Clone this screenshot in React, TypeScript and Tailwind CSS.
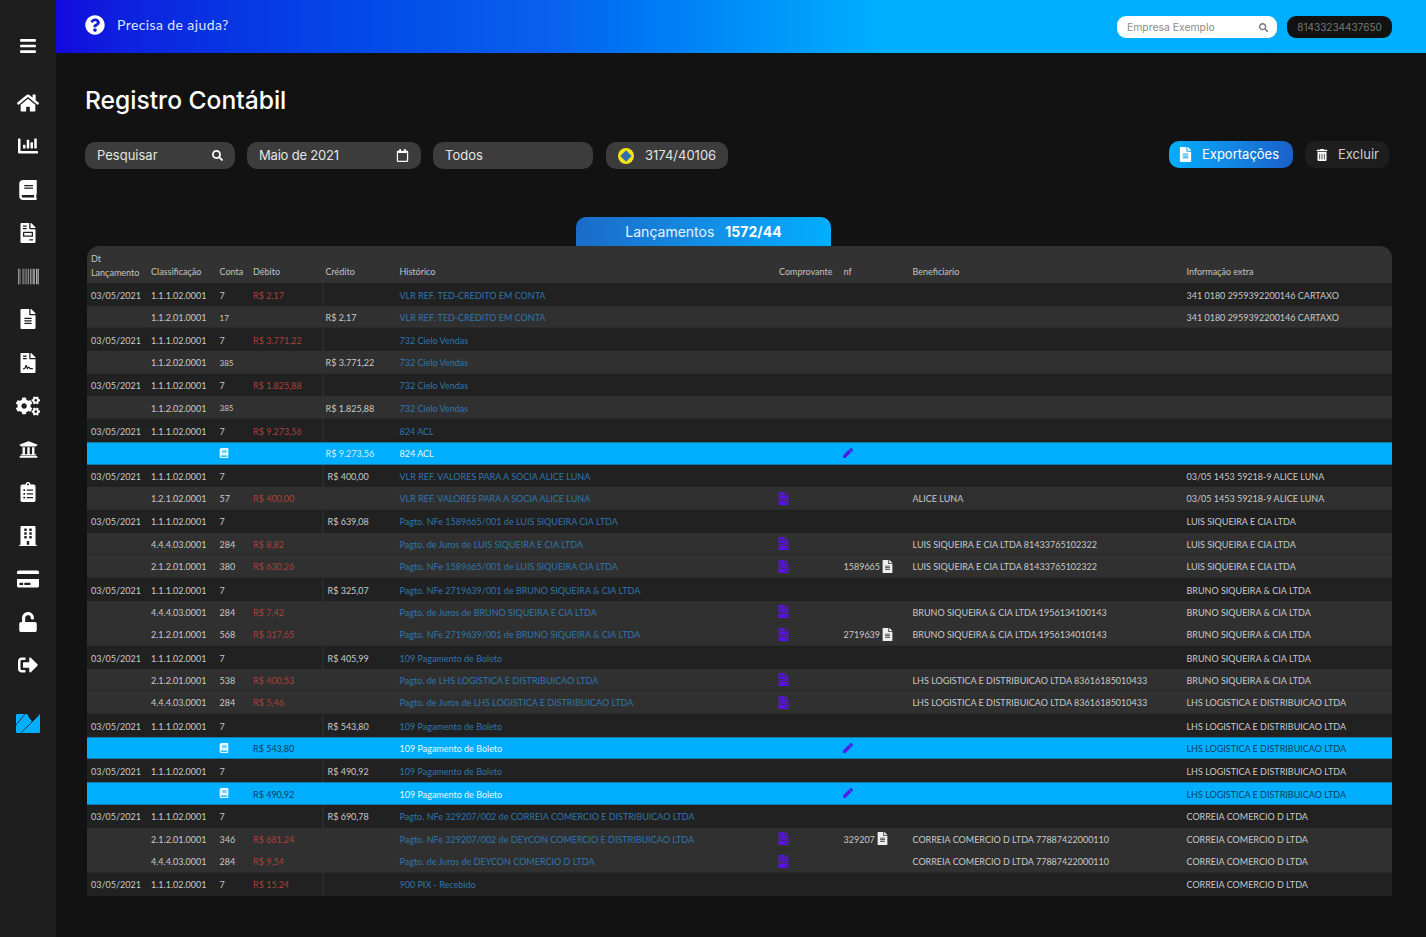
import {
  FaBars,
  FaBook,
  FaBuilding,
  FaChartBar,
  FaClipboardList,
  FaCogs,
  FaCreditCard,
  FaFileAlt,
  FaFileContract,
  FaFileInvoice,
  FaHome,
  FaPen,
  FaQuestionCircle,
  FaRegCalendar,
  FaSearch,
  FaSignOutAlt,
  FaTrashAlt,
  FaUniversity,
  FaUnlock,
  FaBarcode,
} from "react-icons/fa";

type Row = {
  date?: boolean;
  cls?: string;
  conta?: string;
  deb?: string;
  cred?: string;
  hist: string;
  comp?: boolean;
  nf?: string;
  ben?: string;
  extra?: string;
  blue?: boolean;
};

const TED = "VLR REF. TED-CREDITO EM CONTA";
const CIELO = "732 Cielo Vendas";
const ALICE = "VLR REF. VALORES PARA A SOCIA ALICE LUNA";
const BOLETO = "109 Pagamento de Boleto";
const LUIS = "LUIS SIQUEIRA E CIA LTDA";
const BRUNO = "BRUNO SIQUEIRA & CIA LTDA";
const LHS = "LHS LOGISTICA E DISTRIBUICAO LTDA";
const CORREIA = "CORREIA COMERCIO D LTDA";
const C = "1.1.1.02.0001";

const rows: Row[] = [
  { date: true, cls: C, conta: "7", deb: "R$ 2,17", hist: TED, extra: "341 0180 2959392200146 CARTAXO" },
  { cls: "1.1.2.01.0001", conta: "17", cred: "R$ 2,17", hist: TED, extra: "341 0180 2959392200146 CARTAXO" },
  { date: true, cls: C, conta: "7", deb: "R$ 3.771,22", hist: CIELO },
  { cls: "1.1.2.02.0001", conta: "385", cred: "R$ 3.771,22", hist: CIELO },
  { date: true, cls: C, conta: "7", deb: "R$ 1.825,88", hist: CIELO },
  { cls: "1.1.2.02.0001", conta: "385", cred: "R$ 1.825,88", hist: CIELO },
  { date: true, cls: C, conta: "7", deb: "R$ 9.273,56", hist: "824 ACL" },
  { blue: true, cred: "R$ 9.273,56", hist: "824 ACL" },
  { date: true, cls: C, conta: "7", cred: "R$ 400,00", hist: ALICE, extra: "03/05 1453 59218-9 ALICE LUNA" },
  { cls: "1.2.1.02.0001", conta: "57", deb: "R$ 400,00", hist: ALICE, comp: true, ben: "ALICE LUNA", extra: "03/05 1453 59218-9 ALICE LUNA" },
  { date: true, cls: C, conta: "7", cred: "R$ 639,08", hist: "Pagto. NFe 1589665/001 de LUIS SIQUEIRA CIA LTDA", extra: LUIS },
  { cls: "4.4.4.03.0001", conta: "284", deb: "R$ 8,82", hist: "Pagto. de Juros de LUIS SIQUEIRA E CIA LTDA", comp: true, ben: "LUIS SIQUEIRA E CIA LTDA 81433765102322", extra: LUIS },
  { cls: "2.1.2.01.0001", conta: "380", deb: "R$ 630,26", hist: "Pagto. NFe 1589665/001 de LUIS SIQUEIRA CIA LTDA", comp: true, nf: "1589665", ben: "LUIS SIQUEIRA E CIA LTDA 81433765102322", extra: LUIS },
  { date: true, cls: C, conta: "7", cred: "R$ 325,07", hist: "Pagto. NFe 2719639/001 de BRUNO SIQUEIRA & CIA LTDA", extra: BRUNO },
  { cls: "4.4.4.03.0001", conta: "284", deb: "R$ 7,42", hist: "Pagto. de Juros de BRUNO SIQUEIRA E CIA LTDA", comp: true, ben: "BRUNO SIQUEIRA & CIA LTDA 1956134100143", extra: BRUNO },
  { cls: "2.1.2.01.0001", conta: "568", deb: "R$ 317,65", hist: "Pagto. NFe 2719639/001 de BRUNO SIQUEIRA & CIA LTDA", comp: true, nf: "2719639", ben: "BRUNO SIQUEIRA & CIA LTDA 1956134010143", extra: BRUNO },
  { date: true, cls: C, conta: "7", cred: "R$ 405,99", hist: "109 Pagamento de Boleto", extra: BRUNO },
  { cls: "2.1.2.01.0001", conta: "538", deb: "R$ 400,53", hist: "Pagto. de LHS LOGISTICA E DISTRIBUICAO LTDA", comp: true, ben: "LHS LOGISTICA E DISTRIBUICAO LTDA 83616185010433", extra: BRUNO },
  { cls: "4.4.4.03.0001", conta: "284", deb: "R$ 5,46", hist: "Pagto. de Juros de LHS LOGISTICA E DISTRIBUICAO LTDA", comp: true, ben: "LHS LOGISTICA E DISTRIBUICAO LTDA 83616185010433", extra: LHS },
  { date: true, cls: C, conta: "7", cred: "R$ 543,80", hist: BOLETO, extra: LHS },
  { blue: true, deb: "R$ 543,80", hist: BOLETO, extra: LHS },
  { date: true, cls: C, conta: "7", cred: "R$ 490,92", hist: BOLETO, extra: LHS },
  { blue: true, deb: "R$ 490,92", hist: BOLETO, extra: LHS },
  { date: true, cls: C, conta: "7", cred: "R$ 690,78", hist: "Pagto. NFe 329207/002 de CORREIA COMERCIO E DISTRIBUICAO LTDA", extra: CORREIA },
  { cls: "2.1.2.01.0001", conta: "346", deb: "R$ 681,24", hist: "Pagto. NFe 329207/002 de DEYCON COMERCIO E DISTRIBUICAO LTDA", comp: true, nf: "329207", ben: "CORREIA COMERCIO D LTDA 77887422000110", extra: CORREIA },
  { cls: "4.4.4.03.0001", conta: "284", deb: "R$ 9,54", hist: "Pagto. de Juros de DEYCON COMERCIO D LTDA", comp: true, ben: "CORREIA COMERCIO D LTDA 77887422000110", extra: CORREIA },
  { date: true, cls: C, conta: "7", deb: "R$ 15,24", hist: "900 PIX - Recebido", extra: CORREIA },
];

const cols = "grid grid-cols-[60px_68.5px_33.5px_72.5px_74px_379.5px_64.5px_69px_274px_1fr]";

function NavIcons() {
  const items = [
    <FaHome size={22} />,
    <FaChartBar size={20} />,
    <FaBook size={20} />,
    <FaFileInvoice size={20} />,
    <FaBarcode size={21} className="opacity-70" />,
    <FaFileAlt size={20} />,
    <FaFileContract size={20} />,
    <FaCogs size={24} />,
    <FaUniversity size={19} />,
    <FaClipboardList size={20} />,
    <FaBuilding size={20} />,
    <FaCreditCard size={22} />,
    <FaUnlock size={20} />,
    <FaSignOutAlt size={20} />,
  ];
  return (
    <div className="mt-[26.5px] flex flex-col items-center">
      {items.map((icon, i) => (
        <div key={i} className="flex h-[43.25px] w-full items-center justify-center text-white">
          {icon}
        </div>
      ))}
    </div>
  );
}

function Logo() {
  return (
    <svg width="24" height="19" viewBox="0 0 24 19" className="mt-[27px]">
      <path d="M1 0h10l5 8 7-7.500a.6.6 0 0 1 1 .5V18a1 1 0 0 1-1 1H1a1 1 0 0 1-1-1V1a1 1 0 0 1 1-1z" fill="#00aeff" />
      <path d="M0 11L9 0M5 19L23 1" stroke="#1e1e1e" strokeWidth="0.8" />
    </svg>
  );
}

function Cell({ children, className = "" }: { children?: React.ReactNode; className?: string }) {
  return <div className={"flex items-center overflow-hidden whitespace-nowrap pl-1 pt-[2px] " + className}>{children}</div>;
}

function TableRow({ r, i }: { r: Row; i: number }) {
  const bg = r.blue
    ? "bg-[#00aeff] border-y border-[#147aab]"
    : r.date
      ? "bg-[#212121]"
      : "bg-[#303030] border-b border-[#2a2a2a]";
  return (
    <div className={cols + " h-[22.7px] text-[9px] text-[#c9c9c9] " + bg}>
      <Cell>{r.date ? "03/05/2021" : ""}</Cell>
      <Cell>{r.cls}</Cell>
      <Cell className={!r.date && i < 8 ? "text-[8px]" : ""}>
        {r.blue ? <FaBook size={10} className="-ml-[1px] -mt-[2px] text-[#e6f6ff]" /> : r.conta}
      </Cell>
      <Cell className={r.blue ? "text-[#0c4060]" : "text-[#a8423a]"}>{r.deb}</Cell>
      <Cell className={(r.date ? "border-l-2 border-[#2a2a2a] " : "") + (r.blue ? "text-[#d5f1ff]" : "")}>{r.cred}</Cell>
      <Cell className={r.blue ? "text-[#e8f8ff]" : "text-[#2f76ab]"}>{r.hist}</Cell>
      <Cell>{r.comp && <FaFileInvoice size={13} className="-ml-[2px] -mt-[2px] text-[#5a10f0]" />}</Cell>
      <Cell>
        {r.blue && <FaPen size={10} className="-ml-[1px] -mt-[2px] text-[#4a1ee8]" />}
        {r.nf}
        {r.nf && <FaFileAlt size={13} className="ml-[1px] -mt-[2px] text-[#eeeeee]" />}
      </Cell>
      <Cell>{r.ben}</Cell>
      <Cell className={r.blue ? "text-[#0c4060]" : ""}>{r.extra}</Cell>
    </div>
  );
}

export default function App() {
  return (
    <div className="flex h-[937px] w-[1426px] overflow-hidden bg-[#121212] font-['Inter',sans-serif]">
      <aside className="flex w-[56px] shrink-0 flex-col items-center bg-[#1e1e1e] pt-[37px]">
        <FaBars size={18} className="text-white" />
        <NavIcons />
        <Logo />
      </aside>

      <main className="min-w-0 flex-1">
        <header className="flex h-[53px] items-center bg-gradient-to-r from-[#1208dc] via-[#0a60ee] via-36% to-[#00aeff] to-60% pl-[29px] pr-[34px]">
          <FaQuestionCircle size={20} className="-mt-[4px] text-white" />
          <span className="-mt-[4px] ml-[12px] font-['Lato',sans-serif] text-[14px] tracking-[0.4px] text-[#dfe6ff]">Precisa de ajuda?</span>
          <div className="ml-auto mt-[1px] flex h-[22px] w-[160px] items-center justify-between rounded-[9px] bg-white pl-[10px] pr-[9px] pt-[1px] text-[10.4px] text-[#8a8a8a]">
            Empresa Exemplo
            <FaSearch size={9} className="text-[#777777]" />
          </div>
          <div className="ml-[10px] mt-[1px] flex h-[22px] w-[105px] items-center justify-center rounded-[9px] bg-[#121212] pt-[1px] text-[10px] text-[#777777]">
            81433234437650
          </div>
        </header>

        <div className="pl-[29px] pr-[34px]">
          <h1 className="mt-[28px] text-[24.6px] font-medium leading-[38px] text-white">Registro Contábil</h1>

          <div className="mt-[23px] flex items-center text-[13px] text-[#e4e4e4]">
            <div className="flex h-[27px] w-[150px] items-center justify-between rounded-[10px] bg-[#3c3c3c] pl-[12px] pr-[12px] pt-[1px]">
              Pesquisar
              <FaSearch size={11} className="-mt-[1px] text-white" />
            </div>
            <div className="ml-[12px] flex h-[27px] w-[174px] items-center justify-between rounded-[10px] bg-[#3c3c3c] pl-[12px] pr-[12px] pt-[1px]">
              <span className="tracking-[-0.2px]">Maio de 2021</span>
              <FaRegCalendar size={13} className="-mt-[1px] text-white" />
            </div>
            <div className="ml-[12px] flex h-[27px] w-[160px] items-center rounded-[10px] bg-[#3c3c3c] pl-[12px] pt-[1px]">Todos</div>
            <div className="ml-[13px] flex h-[27px] w-[122px] items-center rounded-[10px] bg-[#3c3c3c] pl-[12px] pt-[1px]">
              <span className="-mt-[1px] flex h-[16px] w-[16px] items-center justify-center rounded-full bg-[#f4e412]">
                <span className="h-[8px] w-[8px] rotate-45 bg-[#2f6fb0]" />
              </span>
              <span className="ml-[11px]">3174/40106</span>
            </div>
            <div className="ml-auto -mt-[2px] flex h-[27px] w-[124px] items-center rounded-[10px] bg-gradient-to-r from-[#00aeff] to-[#1a60c8] pl-[9px] text-white">
              <FaFileAlt size={15} />
              <span className="ml-[9px]">Exportações</span>
            </div>
            <div className="-mt-[2px] ml-[12px] mr-[3px] flex h-[27px] w-[84px] items-center rounded-[10px] bg-[#1e1e1e] pl-[11px] text-[#d0d0d0]">
              <FaTrashAlt size={12} className="text-white" />
              <span className="ml-[10px]">Excluir</span>
            </div>
          </div>

          <div className="ml-[491px] mt-[48px] flex h-[29px] w-[255px] items-center justify-center rounded-t-[10px] bg-gradient-to-r from-[#1a6cc8] to-[#00aeff] text-[14px] text-[#e8f4ff]">
            Lançamentos
            <span className="ml-[11px] font-bold text-white">1572/44</span>
          </div>

          <div className="ml-[2px] overflow-hidden rounded-t-[12px] font-['Lato',sans-serif]">
            <div className={cols + " h-[37px] bg-[#323232] text-[9px] text-[#c4c4c4]"}>
              {["Dt Lançamento", "Classificação", "Conta", "Débito", "Crédito", "Histórico", "Comprovante", "nf", "Beneficiario", "Informação extra"].map((h) => (
                <div key={h} className="flex items-end whitespace-nowrap pb-[5px] pl-1">
                  {h === "Dt Lançamento" ? (
                    <span className="-mb-[2px] whitespace-normal leading-[14px]">Dt<br />Lançamento</span>
                  ) : (
                    h
                  )}
                </div>
              ))}
            </div>
            {rows.map((r, i) => (
              <TableRow key={i} r={r} i={i} />
            ))}
          </div>
        </div>
      </main>
    </div>
  );
}
